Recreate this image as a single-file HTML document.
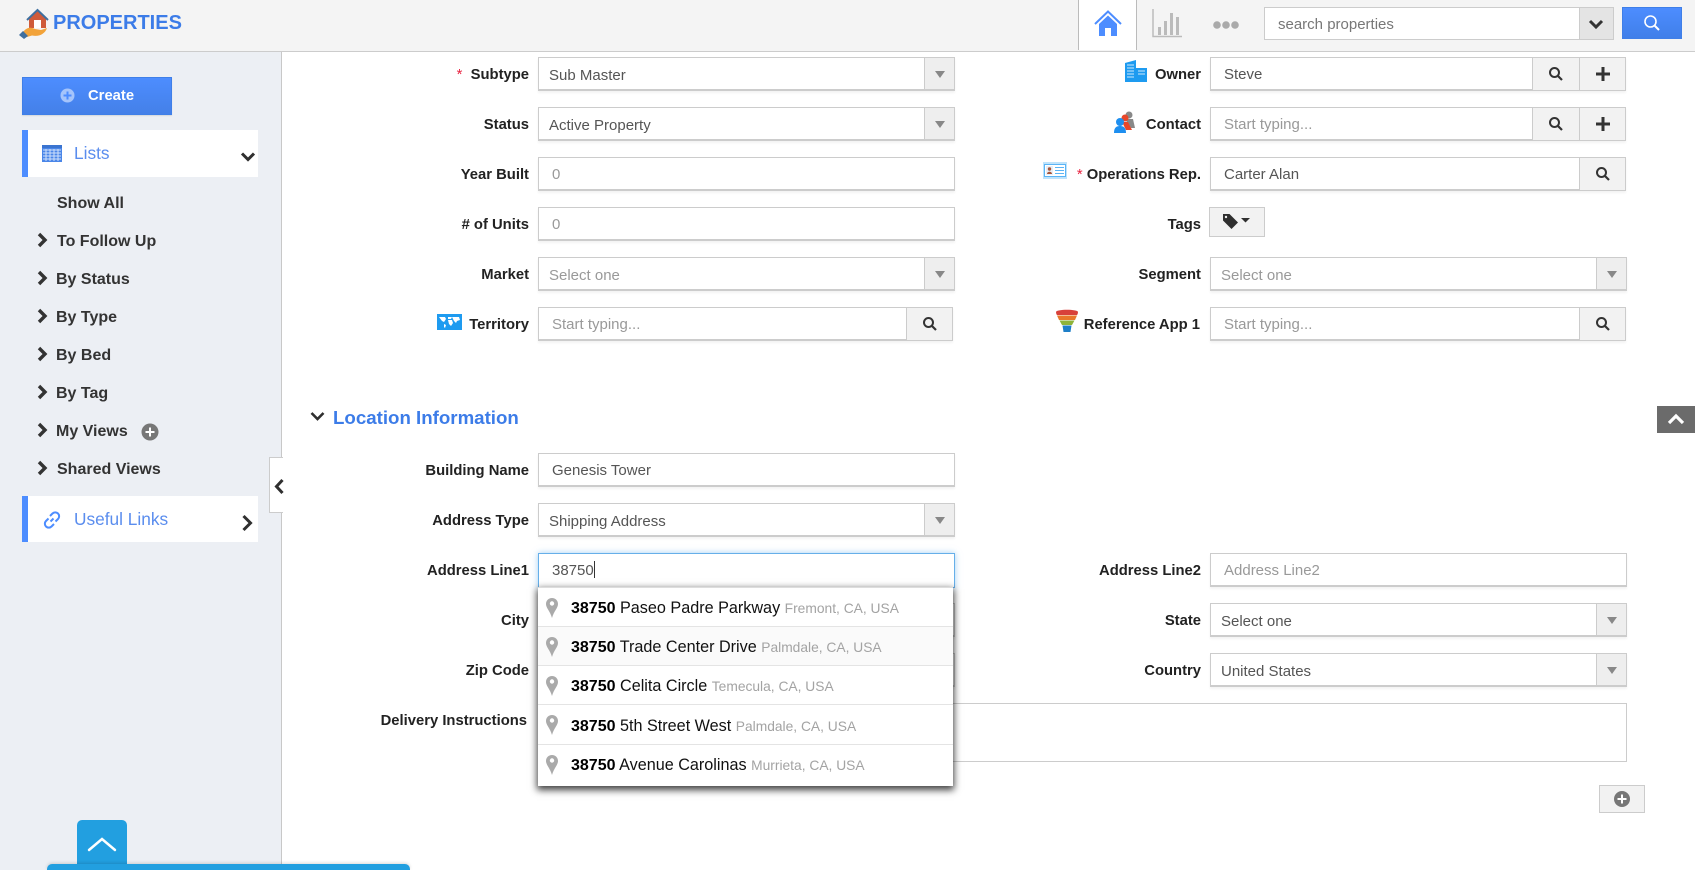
<!DOCTYPE html>
<html>
<head>
<meta charset="utf-8">
<title>Properties</title>
<style>
html,body{margin:0;padding:0;width:1695px;height:870px;overflow:hidden;background:#fff;font-family:"Liberation Sans",sans-serif}
*{box-sizing:border-box}
.a{position:absolute}
.l{position:absolute;height:20px;line-height:22px;font-size:14.8px;font-weight:bold;color:#222;text-align:right;white-space:nowrap}
.ll{left:300px;width:229px}
.lr{left:960px;width:241px}
.star{color:#e8213f;font-weight:normal}
.i{position:absolute;height:34px;border:1px solid #ccc;border-bottom:2px solid #ccc;background:#fff;font-size:15px;line-height:33px;color:#555;padding-left:13px;white-space:nowrap;box-shadow:0 2px 2px rgba(0,0,0,.05)}
.L{left:538px;width:417px}
.R{left:1210px;width:416px}
.ph{color:#999}
.s{padding-left:10px;line-height:35px}
.ar{position:absolute;right:0;top:0;width:30px;height:31px;background:#eee;border-left:1px solid #ccc}
.ar:after{content:"";position:absolute;left:10px;top:13px;border-left:5px solid transparent;border-right:5px solid transparent;border-top:7px solid #888}
.b{position:absolute;top:0;height:32px;background:#f2f2f2;border-left:1px solid #ccc}
.b svg{position:absolute;left:50%;top:50%;transform:translate(-50%,-50%)}
.n{position:absolute;left:57px;height:20px;line-height:22px;font-size:16px;font-weight:bold;color:#333;white-space:nowrap}
.c{position:absolute;left:37px;margin-top:1px}
.it{position:absolute;left:0;width:415px;height:39px;border-bottom:1px solid #e4e4e4;font-size:16.2px;line-height:41px;color:#111;white-space:nowrap;padding-left:33px}
.it b{color:#000;font-size:16px}
.it span{font-size:13.8px;color:#a3a3a3}
.it svg{position:absolute;left:8px;top:10px}
</style>
</head>
<body>
<!-- header -->
<div class="a" style="left:0;top:0;width:1695px;height:52px;background:#f4f4f4;border-bottom:1px solid #ccc"></div>
<svg class="a" style="left:18px;top:8px;overflow:visible" width="30" height="31" viewBox="0 0 30 31">
<path d="M11 11 L20 2 L28 11 L28 20 L11 20Z" fill="#cf5b3a"/>
<path d="M9 12 L19.500 2 L30 12" fill="none" stroke="#3f6f9f" stroke-width="2"/>
<rect x="16" y="12" width="7" height="8" fill="#fff"/>
<path d="M5 24 C9 19 13 19 17 21 L23 22 L29 20 C27 26 21 29 14 27.500 L9 29Z" fill="#f2a33a"/>
<path d="M1 27 L5 23 L10 28 L6 31Z" fill="#3f6f9f"/>
</svg>
<div class="a" style="left:53px;top:11px;font-size:20px;font-weight:bold;color:#3c7ce8;line-height:24px">PROPERTIES</div>

<div class="a" style="left:1078px;top:0;width:59px;height:50px;background:#fff;border-left:1px solid #bbb;border-right:1px solid #bbb"></div>
<svg class="a" style="left:1094px;top:10px" width="28" height="27" viewBox="0 0 28 27">
<path d="M1 14 L14 1.500 L27 14" fill="none" stroke="#4d8dff" stroke-width="2"/>
<path d="M5 14 L14 5.500 L23 14 L23 26 L17 26 L17 18 L11 18 L11 26 L5 26Z" fill="#4d8dff"/>
</svg>
<svg class="a" style="left:1152px;top:9px" width="30" height="29" viewBox="0 0 30 29">
<path d="M1 0V27.500H30" fill="none" stroke="#bbb" stroke-width="1.500"/>
<rect x="6" y="18" width="3" height="8" fill="#bbb"/><rect x="12" y="12" width="3" height="14" fill="#bbb"/><rect x="18" y="4" width="3" height="22" fill="#bbb"/><rect x="24" y="8" width="3" height="18" fill="#bbb"/>
</svg>
<svg class="a" style="left:1212px;top:19px" width="28" height="12" viewBox="0 0 28 12"><circle cx="5" cy="6" r="3.800" fill="#aaa"/><circle cx="14" cy="6" r="3.800" fill="#aaa"/><circle cx="23" cy="6" r="3.800" fill="#aaa"/></svg>

<div class="a" style="left:1264px;top:7px;width:350px;height:33px;background:#fff;border:1px solid #ccc;font-size:15px;line-height:33px;color:#777;padding-left:13px">search properties</div>
<div class="a" style="left:1579px;top:8px;width:34px;height:31px;background:#e4e4e4;border-left:1px solid #ccc"></div>
<svg class="a" style="left:1588px;top:19px" width="16" height="11" viewBox="0 0 16 11"><path d="M2 2 L8 8 L14 2" fill="none" stroke="#333" stroke-width="3"/></svg>
<div class="a" style="left:1622px;top:7px;width:60px;height:32px;background:linear-gradient(#4d8dff,#407fe9);border:1px solid #3f7fe8"></div>
<svg class="a" style="left:1643px;top:14px" width="18" height="18" viewBox="0 0 18 18"><circle cx="7.500" cy="7.500" r="5.500" fill="none" stroke="#fff" stroke-width="1.600"/><path d="M11.500 11.500 L16 16" stroke="#fff" stroke-width="2"/></svg>

<!-- sidebar -->
<div class="a" style="left:0;top:52px;width:282px;height:818px;background:#eceff4;border-right:1px solid #c8c8c8"></div>
<div class="a" style="left:22px;top:77px;width:150px;height:38px;background:linear-gradient(#4d8dff,#4480e8);border:1px solid #3f7fe8;box-shadow:0 1px 1px rgba(0,0,0,.1)"></div>
<svg class="a" style="left:60px;top:88px" width="15" height="15" viewBox="0 0 15 15"><circle cx="7.500" cy="7.500" r="7" fill="#a5c4fb"/><path d="M7.500 3.500V11.500M3.500 7.500H11.500" stroke="#4d8dff" stroke-width="2"/></svg>
<div class="a" style="left:88px;top:86px;font-size:14.800px;font-weight:bold;color:#fff;line-height:20px">Create</div>

<div class="a" style="left:22px;top:130px;width:236px;height:47px;background:#fff;border-left:6px solid #4d8dff"></div>
<svg class="a" style="left:42px;top:145px" width="20" height="17" viewBox="0 0 20 17">
<rect width="20" height="17" fill="#4a86e8"/><rect x="0" y="0" width="20" height="3" fill="#3a74d0"/>
<path d="M1 5H19M1 8H19M1 11H19M1 14H19M4 4V16M8 4V16M12 4V16M16 4V16" stroke="#cfe0fb" stroke-width="1"/>
</svg>
<div class="a" style="left:74px;top:143px;font-size:17.300px;line-height:21px;color:#5a8dee">Lists</div>
<svg class="a" style="left:240px;top:151px" width="16" height="12" viewBox="0 0 16 12"><path d="M2 2.500 L8 8.500 L14 2.500" fill="none" stroke="#2f2f2f" stroke-width="3"/></svg>

<div class="n" style="top:193px">Show All</div>
<svg class="c" style="top:231px" width="11" height="16" viewBox="0 0 11 16"><path d="M2 2 L8 8 L2 14" fill="none" stroke="#333" stroke-width="3.400"/></svg>
<div class="n" style="top:231px">To Follow Up</div>
<svg class="c" style="top:269px" width="11" height="16" viewBox="0 0 11 16"><path d="M2 2 L8 8 L2 14" fill="none" stroke="#333" stroke-width="3.400"/></svg>
<div class="n" style="top:269px;left:56px">By Status</div>
<svg class="c" style="top:307px" width="11" height="16" viewBox="0 0 11 16"><path d="M2 2 L8 8 L2 14" fill="none" stroke="#333" stroke-width="3.400"/></svg>
<div class="n" style="top:307px;left:56px">By Type</div>
<svg class="c" style="top:345px" width="11" height="16" viewBox="0 0 11 16"><path d="M2 2 L8 8 L2 14" fill="none" stroke="#333" stroke-width="3.400"/></svg>
<div class="n" style="top:345px;left:56px">By Bed</div>
<svg class="c" style="top:383px" width="11" height="16" viewBox="0 0 11 16"><path d="M2 2 L8 8 L2 14" fill="none" stroke="#333" stroke-width="3.400"/></svg>
<div class="n" style="top:383px;left:56px">By Tag</div>
<svg class="c" style="top:421px" width="11" height="16" viewBox="0 0 11 16"><path d="M2 2 L8 8 L2 14" fill="none" stroke="#333" stroke-width="3.400"/></svg>
<div class="n" style="top:421px;left:56px">My Views</div>
<svg class="a" style="left:141px;top:423px" width="18" height="18" viewBox="0 0 18 18"><circle cx="9" cy="9" r="8.500" fill="#777"/><path d="M9 4.500V13.500M4.500 9H13.500" stroke="#fff" stroke-width="2"/></svg>
<svg class="c" style="top:459px" width="11" height="16" viewBox="0 0 11 16"><path d="M2 2 L8 8 L2 14" fill="none" stroke="#333" stroke-width="3.400"/></svg>
<div class="n" style="top:459px">Shared Views</div>

<div class="a" style="left:22px;top:496px;width:236px;height:46px;background:#fff;border-left:6px solid #4d8dff"></div>
<svg class="a" style="left:42px;top:510px" width="20" height="20" viewBox="0 0 20 20"><path d="M8.500 11.500 L11.500 8.500M8 6 L10.500 3.500a3.500 3.500 0 0 1 5.500 5.500L13.500 11.500M12 14 L9.500 16.500a3.500 3.500 0 0 1-5.500-5.500L6.500 8.500" fill="none" stroke="#4d8dff" stroke-width="2"/></svg>
<div class="a" style="left:74px;top:508px;font-size:17.300px;line-height:22px;color:#5a8dee">Useful Links</div>
<svg class="a" style="left:241px;top:514px" width="12" height="18" viewBox="0 0 12 18"><path d="M2.500 2 L9.500 9 L2.500 16" fill="none" stroke="#2f2f2f" stroke-width="3"/></svg>

<div class="a" style="left:269px;top:457px;width:14px;height:56px;background:#fff;border:1px solid #ccc;border-right:none"></div>
<svg class="a" style="left:274px;top:478px" width="11" height="17" viewBox="0 0 11 17"><path d="M8.500 2 L2.500 8.500 L8.500 15" fill="none" stroke="#2f2f2f" stroke-width="3"/></svg>

<!-- bottom -->
<div class="a" style="left:77px;top:820px;width:50px;height:50px;background:#229fe0;border-radius:5px 5px 0 0"></div>
<svg class="a" style="left:87px;top:836px" width="30" height="18" viewBox="0 0 30 18"><path d="M2 14 L15 3 L28 14" fill="none" stroke="#fff" stroke-width="2.500" stroke-linecap="round"/></svg>
<div class="a" style="left:47px;top:864px;width:363px;height:6px;background:#229fe0;border-radius:5px 5px 0 0;box-shadow:0 -1px 3px rgba(0,0,0,.15)"></div>

<!-- Top form, left -->
<div class="l ll" style="top:64px"><span class="star">*</span>&nbsp; Subtype</div>
<div class="i L s" style="top:57px">Sub Master<div class="ar"></div></div>
<div class="l ll" style="top:114px">Status</div>
<div class="i L s" style="top:107px">Active Property<div class="ar"></div></div>
<div class="l ll" style="top:164px">Year Built</div>
<div class="i L ph" style="top:157px">0</div>
<div class="l ll" style="top:214px"># of Units</div>
<div class="i L ph" style="top:207px">0</div>
<div class="l ll" style="top:264px">Market</div>
<div class="i L s ph" style="top:257px">Select one<div class="ar"></div></div>
<svg class="a" style="left:437px;top:314px" width="25" height="16" viewBox="0 0 25 16"><rect width="25" height="16" fill="#1e9bf0"/><path d="M2 3h6l1 2-2 3-2-1zM7 10l2 1-1 3-1-1zM11 3h4l-1 2h-3zM11 6h4l1 3-2 3-2-2zM15 3h7l1 3-3 1-1 2-2-2z" fill="#fff"/></svg>
<div class="l ll" style="top:314px">Territory</div>
<div class="i ph" style="top:307px;left:538px;width:415px">Start typing...<div class="b" style="right:0;width:46px"><svg width="14" height="14" viewBox="0 0 14 14"><circle cx="5.500" cy="5.500" r="4.500" fill="none" stroke="#333" stroke-width="2"/><path d="M9 9 L13 13" stroke="#333" stroke-width="2.200"/></svg></div></div>

<!-- Top form, right -->
<svg class="a" style="left:1124px;top:60px" width="24" height="22" viewBox="0 0 24 22"><path d="M1 3 L12 0 V22 H1Z" fill="#1e9bf0"/><rect x="12" y="8" width="11" height="14" fill="#1e9bf0"/><path d="M3 5H10M3 8H10M3 11H10M3 14H10M3 17H10M14 11H21M14 14H21" stroke="#cfe9fb" stroke-width="1"/></svg>
<div class="l lr" style="top:64px">Owner</div>
<div class="i R" style="top:57px">Steve<div class="b" style="right:46px;width:47px"><svg width="14" height="14" viewBox="0 0 14 14"><circle cx="5.500" cy="5.500" r="4.500" fill="none" stroke="#333" stroke-width="2"/><path d="M9 9 L13 13" stroke="#333" stroke-width="2.200"/></svg></div><div class="b" style="right:0;width:46px"><svg width="14" height="14" viewBox="0 0 14 14"><path d="M7 0V14M0 7H14" stroke="#333" stroke-width="3"/></svg></div></div>
<svg class="a" style="left:1113px;top:110px" width="23" height="24" viewBox="0 0 23 24"><circle cx="16" cy="5" r="3.500" fill="#888"/><path d="M12 9h8l2 9h-4z" fill="#888"/><circle cx="12" cy="8" r="3.500" fill="#e8472a"/><path d="M9 12h6l4 8h-6z" fill="#e8472a"/><circle cx="7" cy="12" r="4" fill="#1e8ff0"/><path d="M1 23 C1 17 4 16 7 16 C10 16 13 17 13 23Z" fill="#1e8ff0"/></svg>
<div class="l lr" style="top:114px">Contact</div>
<div class="i R ph" style="top:107px">Start typing...<div class="b" style="right:46px;width:47px"><svg width="14" height="14" viewBox="0 0 14 14"><circle cx="5.500" cy="5.500" r="4.500" fill="none" stroke="#333" stroke-width="2"/><path d="M9 9 L13 13" stroke="#333" stroke-width="2.200"/></svg></div><div class="b" style="right:0;width:46px"><svg width="14" height="14" viewBox="0 0 14 14"><path d="M7 0V14M0 7H14" stroke="#333" stroke-width="3"/></svg></div></div>
<svg class="a" style="left:1043px;top:162px" width="24" height="17" viewBox="0 0 24 17"><rect width="24" height="17" fill="#bfe3fb"/><rect x="1.500" y="2.500" width="21" height="12" fill="#fff" stroke="#5ab4f5"/><rect x="3" y="4" width="7" height="9" fill="#e8eef5"/><circle cx="6.500" cy="7" r="1.700" fill="#a5553a"/><path d="M4 12c0-3 5-3 5 0z" fill="#a5553a"/><path d="M12 5.500H21M12 8.500H21M12 11.500H21" stroke="#5ab4f5"/></svg>
<div class="l lr" style="top:164px"><span class="star">*</span>&nbsp;Operations Rep.</div>
<div class="i R" style="top:157px">Carter Alan<div class="b" style="right:0;width:46px"><svg width="14" height="14" viewBox="0 0 14 14"><circle cx="5.500" cy="5.500" r="4.500" fill="none" stroke="#333" stroke-width="2"/><path d="M9 9 L13 13" stroke="#333" stroke-width="2.200"/></svg></div></div>
<div class="l lr" style="top:214px">Tags</div>
<div class="a" style="left:1209px;top:207px;width:56px;height:30px;background:#f2f2f2;border:1px solid #ccc"></div>
<svg class="a" style="left:1222px;top:213px" width="32" height="17" viewBox="0 0 32 17"><path d="M1 1H7.500L16 9.500 9.500 16 1 7.500Z" fill="#2f2f2f"/><circle cx="4" cy="4" r="1.200" fill="#f2f2f2"/><path d="M19 5H28L23.500 9.500Z" fill="#2f2f2f"/></svg>
<div class="l lr" style="top:264px">Segment</div>
<div class="i R s ph" style="top:257px;width:417px">Select one<div class="ar"></div></div>
<svg class="a" style="left:1056px;top:309px" width="22" height="23" viewBox="0 0 22 23"><path d="M0 3C0 0 22 0 22 3 22 5 21 6 21 6H1S0 5 0 3Z" fill="#d8413a"/><path d="M1 6.500H21L19 11H3Z" fill="#e8782a"/><path d="M3.500 11.500H18.500L16 16H6Z" fill="#8fb43a"/><path d="M6.500 16.500H15.500L14.500 23H7.500Z" fill="#1e7fc8"/></svg>
<div class="l lr" style="top:314px;width:240px">Reference App 1</div>
<div class="i R ph" style="top:307px">Start typing...<div class="b" style="right:0;width:46px"><svg width="14" height="14" viewBox="0 0 14 14"><circle cx="5.500" cy="5.500" r="4.500" fill="none" stroke="#333" stroke-width="2"/><path d="M9 9 L13 13" stroke="#333" stroke-width="2.200"/></svg></div></div>

<!-- back to top -->
<div class="a" style="left:1657px;top:406px;width:38px;height:27px;background:#6b6b6b"></div>
<svg class="a" style="left:1667px;top:413px" width="18" height="13" viewBox="0 0 18 13"><path d="M2 10 L9 3 L16 10" fill="none" stroke="#fff" stroke-width="3.200"/></svg>

<!-- Location -->
<svg class="a" style="left:310px;top:411px" width="15" height="11" viewBox="0 0 15 11"><path d="M1.500 2 L7.500 8 L13.500 2" fill="none" stroke="#2f2f2f" stroke-width="2.600"/></svg>
<div class="a" style="left:333px;top:406px;font-size:18.700px;font-weight:bold;line-height:23px;color:#3c7ce8">Location Information</div>

<div class="l ll" style="top:460px">Building Name</div>
<div class="i L" style="top:453px">Genesis Tower</div>
<div class="l ll" style="top:510px">Address Type</div>
<div class="i L s" style="top:503px">Shipping Address<div class="ar"></div></div>
<div class="l ll" style="top:560px">Address Line1</div>
<div class="i L" style="top:553px;height:35px;border:1px solid #66afe9;box-shadow:0 0 6px rgba(102,175,233,.6);line-height:34px">38750<span style="display:inline-block;width:1px;height:17px;background:#333;vertical-align:-3px"></span></div>
<div class="l ll" style="top:610px">City</div>
<div class="i L" style="top:603px"></div>
<div class="l ll" style="top:660px">Zip Code</div>
<div class="i L" style="top:653px"></div>
<div class="l" style="left:300px;width:227px;top:710px">Delivery Instructions</div>
<div class="a" style="left:538px;top:703px;width:1089px;height:59px;border:1px solid #ccc;background:#fff"></div>

<div class="l lr" style="top:560px">Address Line2</div>
<div class="i R ph" style="top:553px;width:417px">Address Line2</div>
<div class="l lr" style="top:610px">State</div>
<div class="i R s" style="top:603px;width:417px">Select one<div class="ar"></div></div>
<div class="l lr" style="top:660px">Country</div>
<div class="i R s" style="top:653px;width:417px">United States<div class="ar"></div></div>

<div class="a" style="left:1599px;top:785px;width:46px;height:28px;background:#f2f2f2;border:1px solid #ccc"></div>
<svg class="a" style="left:1613px;top:790px" width="18" height="18" viewBox="0 0 18 18"><circle cx="9" cy="9" r="8" fill="#777"/><path d="M9 4.500V13.500M4.500 9H13.500" stroke="#fff" stroke-width="2"/></svg>

<!-- dropdown -->
<div class="a" style="left:538px;top:587px;width:415px;height:199px;background:#fff;box-shadow:0 3px 7px 1px rgba(0,0,0,.75);border-top:1px solid #ddd">
<div class="it" style="top:0"><svg width="12" height="20" viewBox="0 0 12 20"><path d="M6 0C2.500 0 0 2.500 0 6 0 10 4 13 6 20 8 13 12 10 12 6 12 2.500 9.500 0 6 0Z" fill="#aaa"/><circle cx="6" cy="5.500" r="2.200" fill="#fff"/></svg><b>38750</b> Paseo Padre Parkway <span>Fremont, CA, USA</span></div>
<div class="it" style="top:39px;background:#fafafa"><svg width="12" height="20" viewBox="0 0 12 20"><path d="M6 0C2.500 0 0 2.500 0 6 0 10 4 13 6 20 8 13 12 10 12 6 12 2.500 9.500 0 6 0Z" fill="#aaa"/><circle cx="6" cy="5.500" r="2.200" fill="#fff"/></svg><b>38750</b> Trade Center Drive <span>Palmdale, CA, USA</span></div>
<div class="it" style="top:78px"><svg width="12" height="20" viewBox="0 0 12 20"><path d="M6 0C2.500 0 0 2.500 0 6 0 10 4 13 6 20 8 13 12 10 12 6 12 2.500 9.500 0 6 0Z" fill="#aaa"/><circle cx="6" cy="5.500" r="2.200" fill="#fff"/></svg><b>38750</b> Celita Circle <span>Temecula, CA, USA</span></div>
<div class="it" style="top:117px;height:40px;line-height:43px"><svg width="12" height="20" viewBox="0 0 12 20"><path d="M6 0C2.500 0 0 2.500 0 6 0 10 4 13 6 20 8 13 12 10 12 6 12 2.500 9.500 0 6 0Z" fill="#aaa"/><circle cx="6" cy="5.500" r="2.200" fill="#fff"/></svg><b>38750</b> 5th Street West <span>Palmdale, CA, USA</span></div>
<div class="it" style="top:157px;border-bottom:none"><svg width="12" height="20" viewBox="0 0 12 20"><path d="M6 0C2.500 0 0 2.500 0 6 0 10 4 13 6 20 8 13 12 10 12 6 12 2.500 9.500 0 6 0Z" fill="#aaa"/><circle cx="6" cy="5.500" r="2.200" fill="#fff"/></svg><b>38750</b> Avenue Carolinas <span>Murrieta, CA, USA</span></div>
</div>
</body>
</html>
